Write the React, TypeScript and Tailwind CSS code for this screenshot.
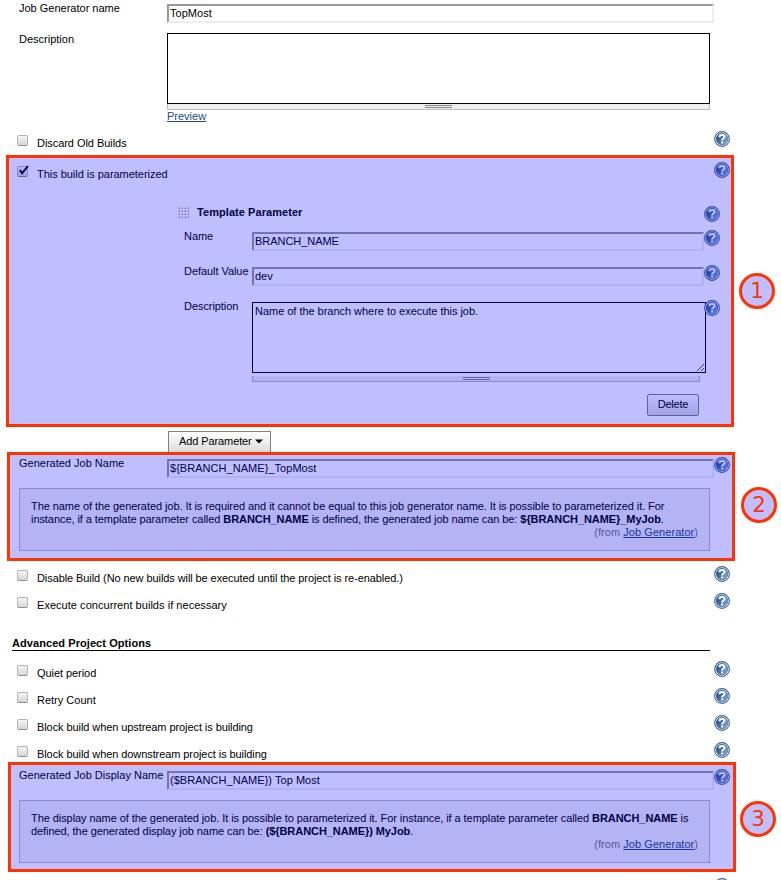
import type { ReactNode } from "react";

function HelpIcon() {
  return (
    <svg width="16" height="16" viewBox="0 0 16 16" className="block shrink-0" aria-label="Help">
      <defs>
        <linearGradient id="help-disc" x1="0" y1="0.2" x2="1" y2="0.8">
          <stop offset="0" stopColor="#1f4379" />
          <stop offset="0.5" stopColor="#4a78b0" />
          <stop offset="1" stopColor="#86aeda" />
        </linearGradient>
      </defs>
      <circle cx="8" cy="8" r="7.4" fill="#fff" stroke="#3b6496" strokeWidth="1.1" />
      <circle cx="8" cy="8" r="5.8" fill="url(#help-disc)" stroke="#2d558a" strokeWidth="0.6" />
      <path d="M5.4 6.2C5.4 4.6 6.6 3.9 8 3.9C9.6 3.9 10.6 4.7 10.6 5.9C10.6 7.6 8.1 7.5 8.1 9.5" fill="none" stroke="#fff" strokeWidth="2" />
      <rect x="7.1" y="10.5" width="2" height="2" fill="#fff" />
    </svg>
  );
}

function Checkbox({ checked = false }: { checked?: boolean }) {
  return (
    <span className="relative mt-1 block size-[11px] shrink-0 rounded-[2px] border border-[#b4b4b4] border-b-[#8c8c8c] bg-linear-to-b from-[#f4f4f4] to-[#d6d6d6]">
      {checked && (
        <svg width="13" height="12" viewBox="0 0 13 12" className="absolute -top-[2px] left-0">
          <path d="M1.8 5.2L4.2 8.2L10 1" fill="none" stroke="#000" strokeWidth="1.9" />
        </svg>
      )}
    </span>
  );
}

function CheckRow({ label, checked, tall, tracking = "" }: { label: string; checked?: boolean; tall?: boolean; tracking?: string }) {
  return (
    <div className={`flex items-start pl-[17px] ${tall ? "h-[31px]" : "h-[27px]"}`}>
      <Checkbox checked={checked} />
      <span className={`mt-[6px] ml-[9px] w-[677px] whitespace-nowrap ${tracking}`}>{label}</span>
      <HelpIcon />
    </div>
  );
}

function TextInput({ value, wide }: { value: string; wide?: boolean }) {
  return (
    <input
      defaultValue={value}
      className={`mt-[2px] block h-[19px] shrink-0 border-2 border-t-[#999] border-r-[#eee] border-b-[#eee] border-l-[#999] bg-white px-px pb-[2px] outline-none ${wide ? "w-[547px] tracking-[0.04px]" : "w-[452px] tracking-[-0.04px]"}`}
    />
  );
}

function DragHandle() {
  return (
    <div className="flex h-[6px] flex-col items-center gap-px border border-t-0 border-[#bbb] bg-[#eee] pt-px">
      <div className="h-px w-[27px] bg-[#888]" />
      <div className="h-px w-[27px] bg-[#888]" />
    </div>
  );
}

function ParamRow({ label, children }: { label: string; children: ReactNode }) {
  return (
    <div className="flex h-[35px] items-start pl-[184px]">
      <span className="w-[68px] shrink-0 tracking-[-0.06px] whitespace-nowrap">{label}</span>
      <div className="w-[452px] shrink-0">{children}</div>
      <div className="relative">
        <HelpIcon />
      </div>
    </div>
  );
}

function GeneratedField({ label, value, children }: { label: string; value: string; children: ReactNode }) {
  return (
    <>
      <div className="flex h-[31px] items-start pl-[19px]">
        <span className="w-[148px] shrink-0 whitespace-nowrap">{label}</span>
        <TextInput value={value} wide />
        <HelpIcon />
      </div>
      <div className="ml-[19px] h-[63px] w-[691px] border border-[#bbb] bg-[#f0f0f0] px-[11px] pt-[11px]">
        <div className="tracking-[-0.068px] whitespace-nowrap">{children}</div>
        <div className="text-right tracking-[0.05px] text-[#777]">
          (from <a className="text-[#204a87] underline">Job Generator</a>)
        </div>
      </div>
    </>
  );
}

function Grip() {
  return (
    <svg width="12" height="12" className="mt-px block" shapeRendering="crispEdges">
      {[0, 3, 6, 9].map((y) =>
        [0, 3, 6, 9].map((x) => (
          <g key={`${x}-${y}`}>
            <rect x={x + 1} y={y} width="1" height="1" fill="#c4c4c4" />
            <rect x={x} y={y + 1} width="1" height="1" fill="#c8c8c8" />
            <rect x={x + 1} y={y + 1} width="1" height="1" fill="#aaa" />
          </g>
        )),
      )}
    </svg>
  );
}

function Badge({ n, place }: { n: number; place: string }) {
  return (
    <div className={`absolute flex size-9 items-center justify-center rounded-full border-3 border-[#ff3300] bg-[#bfbfff] font-['DejaVu_Sans',sans-serif] text-[21.5px] leading-[30px] text-[#ff3300] ${place}`}>
      {n}
    </div>
  );
}

export default function App() {
  return (
    <div className="relative h-[880px] w-[781px] overflow-hidden bg-white font-['Liberation_Sans',Arial,sans-serif] text-[11px] leading-[13px] text-black">
      <div className="flex h-[31px] items-start pt-[2px] pl-[19px]">
        <span className="w-[148px] shrink-0">Job Generator name</span>
        <TextInput value="TopMost" wide />
      </div>
      <div className="flex h-[100px] items-start pt-[2px] pl-[19px]">
        <span className="w-[148px] shrink-0">Description</span>
        <div className="w-[543px]">
          <textarea className="block h-[71px] w-full resize-none border border-black bg-white outline-none" />
          <DragHandle />
          <a className="block text-[#204a87] underline">Preview</a>
        </div>
      </div>

      <CheckRow label="Discard Old Builds" tall tracking="tracking-[-0.05px]" />
      <CheckRow label="This build is parameterized" checked tracking="tracking-[-0.03px]" />

      <div className="flex h-[41px] items-start pt-[17px] pl-[178px]">
        <Grip />
        <b className="ml-[7px] w-[507px] tracking-[0.06px]">Template Parameter</b>
        <HelpIcon />
      </div>
      <ParamRow label="Name">
        <TextInput value="BRANCH_NAME" />
      </ParamRow>
      <ParamRow label="Default Value">
        <TextInput value="dev" />
      </ParamRow>
      <ParamRow label="Description">
        <div className="relative mt-[2px] w-[454px]">
          <textarea
            defaultValue="Name of the branch where to execute this job."
            className="block h-[71px] w-full resize-none border border-black bg-white p-[2px] tracking-[-0.03px] outline-none"
          />
          <svg width="9" height="9" className="absolute right-[1px] bottom-[1px]">
            <path d="M1 8L8 1M5 8L8 5" stroke="#555" strokeWidth="1" />
          </svg>
        </div>
        <div className="mt-[3px] w-[448px]">
          <DragHandle />
        </div>
      </ParamRow>
      <div className="flex h-[96px] justify-end pt-[59px] pr-[82px]">
        <button className="h-[22px] w-[52px] rounded-[2px] border border-[#808080] bg-linear-to-b from-white to-[#d8d8d8] pb-px tracking-[-0.2px]">Delete</button>
      </div>
      <div className="h-[26px] pl-[168px]">
        <button className="flex h-[22px] w-[103px] items-center gap-[3px] border border-[#808080] bg-linear-to-b from-white to-[#dcdcdc] pb-[2px] pl-[10px] tracking-[-0.1px]">
          Add Parameter
          <svg width="8" height="5" className="mt-px">
            <path d="M0 0.5H8L4 4.5Z" fill="#000" />
          </svg>
        </button>
      </div>

      <GeneratedField label="Generated Job Name" value="${BRANCH_NAME}_TopMost">
        The name of the generated job. It is required and it cannot be equal to this job generator name. It is possible to parameterized it. For
        <br />
        instance, if a template parameter called <b>BRANCH_NAME</b> is defined, the generated job name can be: <b>{"${BRANCH_NAME}_MyJob"}</b>.
      </GeneratedField>

      <div className="h-[15px]" />
      <CheckRow label="Disable Build (No new builds will be executed until the project is re-enabled.)" tracking="tracking-[-0.083px]" />
      <CheckRow label="Execute concurrent builds if necessary" tracking="tracking-[0.04px]" />

      <h2 className="mt-[17px] mb-[10px] ml-3 h-[14px] w-[698px] border-b border-black font-bold tracking-[0.07px]">Advanced Project Options</h2>

      <CheckRow label="Quiet period" tracking="tracking-[-0.06px]" />
      <CheckRow label="Retry Count" />
      <CheckRow label="Block build when upstream project is building" tracking="tracking-[-0.08px]" />
      <CheckRow label="Block build when downstream project is building" tracking="tracking-[-0.08px]" />

      <GeneratedField label="Generated Job Display Name" value="($BRANCH_NAME}) Top Most">
        The display name of the generated job. It is possible to parameterized it. For instance, if a template parameter called <b>BRANCH_NAME</b> is
        <br />
        defined, the generated display job name can be: <b>{"(${BRANCH_NAME}) MyJob"}</b>.
      </GeneratedField>
      <div className="flex pt-[15px] pl-[714px]">
        <HelpIcon />
      </div>

      <div className="pointer-events-none absolute top-[155px] left-[6px] h-[272px] w-[728px] border-3 border-[#ff3300] bg-[#0000ff]/25 bg-clip-padding" />
      <div className="pointer-events-none absolute top-[452px] left-[7px] h-[109px] w-[728px] border-3 border-[#ff3300] bg-[#0000ff]/25 bg-clip-padding" />
      <div className="pointer-events-none absolute top-[762px] left-[8px] h-[110px] w-[728px] border-3 border-[#ff3300] bg-[#0000ff]/25 bg-clip-padding" />
      <Badge n={1} place="top-[273px] left-[739px]" />
      <Badge n={2} place="top-[487px] left-[741px]" />
      <Badge n={3} place="top-[801px] left-[740px]" />
    </div>
  );
}
